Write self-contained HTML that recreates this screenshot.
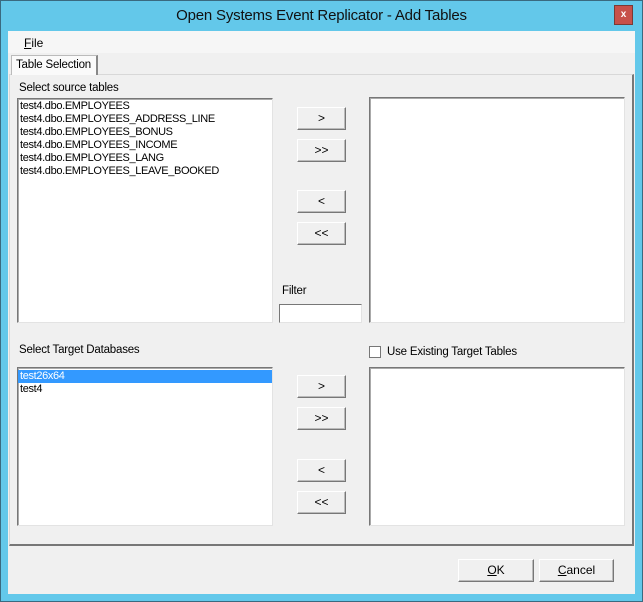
<!DOCTYPE html>
<html><head><style>
*{box-sizing:border-box;margin:0;padding:0}
body{width:643px;height:602px;background:#63c8ea;position:relative;overflow:hidden;font-family:"Liberation Sans",sans-serif;font-size:11px;color:#000}
.a{position:absolute;white-space:nowrap}
.win{left:0;top:0;width:643px;height:602px;border:1px solid #3a6a80}
.title{left:0;top:0;width:643px;height:31px;text-align:center;line-height:32px;font-size:15px;color:#111;letter-spacing:-0.2px}
.close{left:614px;top:5px;width:19px;height:20px;background:#c7514a;border:1px solid #7a3a35;color:#fff;font-size:10px;text-align:center;line-height:17px;font-weight:bold}
.client{left:8px;top:31px;width:627px;height:563px;background:#f0f0f0}
.menu{left:8px;top:31px;width:627px;height:22px;background:#f6f6f6}
.tab{left:11px;top:55px;width:87px;height:20px;background:#fafafa;border:1px solid #bbb;border-bottom:none;border-right:2px solid #888;padding:3px 0 0 4px;font-size:11.5px;letter-spacing:-0.2px}
.panel{left:9px;top:74px;width:625px;height:472px;border:1px solid #d8d8d8;border-right:2px solid #777;border-bottom:2px solid #777;background:#f0f0f0}
.lb{background:#fff;border:1px solid;border-color:#777 #e3e3e3 #e3e3e3 #777;box-shadow:inset 1px 1px 0 #aaa;padding-top:1px}
.lb div{padding-left:2px;height:13px;line-height:13px;font-size:11px;letter-spacing:-0.35px}
.btn{width:49px;height:23px;background:#f0f0f0;border:1px solid;border-color:#fff #777 #777 #fff;box-shadow:inset -1px -1px 0 #bbb;text-align:center;line-height:20px;font-size:12px}
.lbl{font-size:11.5px;letter-spacing:-0.2px}
.ok{width:76px;height:23px;border:1px solid;border-color:#fff #777 #777 #fff;box-shadow:inset -1px -1px 0 #bbb;text-align:center;line-height:21px;font-size:12px}
</style></head><body>
<div class="a win"></div>
<div class="a title">Open Systems Event Replicator - Add Tables</div>
<div class="a close">x</div>
<div class="a client"></div>
<div class="a menu"><span class="a" style="left:16px;top:5px;font-size:12px"><u>F</u>ile</span></div>
<div class="a panel"></div>
<div class="a tab">Table Selection</div>
<div class="a lbl" style="left:19px;top:82px">Select source tables</div>
<div class="a lb" style="left:17px;top:98px;width:256px;height:225px">
<div>test4.dbo.EMPLOYEES</div><div>test4.dbo.EMPLOYEES_ADDRESS_LINE</div><div>test4.dbo.EMPLOYEES_BONUS</div><div>test4.dbo.EMPLOYEES_INCOME</div><div>test4.dbo.EMPLOYEES_LANG</div><div>test4.dbo.EMPLOYEES_LEAVE_BOOKED</div></div>
<div class="a btn" style="left:297px;top:107px">&gt;</div>
<div class="a btn" style="left:297px;top:139px">&gt;&gt;</div>
<div class="a btn" style="left:297px;top:190px">&lt;</div>
<div class="a btn" style="left:297px;top:222px">&lt;&lt;</div>
<div class="a lb" style="left:369px;top:97px;width:256px;height:226px"></div>
<div class="a lbl" style="left:282px;top:285px">Filter</div>
<div class="a lb" style="left:279px;top:304px;width:83px;height:19px;box-shadow:none"></div>
<div class="a lbl" style="left:19px;top:344px">Select Target Databases</div>
<div class="a" style="left:369px;top:346px;width:12px;height:12px;background:#fff;border:1px solid #777"></div>
<div class="a lbl" style="left:387px;top:346px">Use Existing Target Tables</div>
<div class="a lb" style="left:17px;top:367px;width:256px;height:159px">
<div style="background:#3399ff;color:#fff;margin-top:1px">test26x64</div><div>test4</div></div>
<div class="a btn" style="left:297px;top:375px">&gt;</div>
<div class="a btn" style="left:297px;top:407px">&gt;&gt;</div>
<div class="a btn" style="left:297px;top:459px">&lt;</div>
<div class="a btn" style="left:297px;top:491px">&lt;&lt;</div>
<div class="a lb" style="left:369px;top:367px;width:256px;height:159px"></div>
<div class="a ok" style="left:458px;top:559px"><u>O</u>K</div>
<div class="a ok" style="left:539px;top:559px;width:75px"><u>C</u>ancel</div>
</body></html>
